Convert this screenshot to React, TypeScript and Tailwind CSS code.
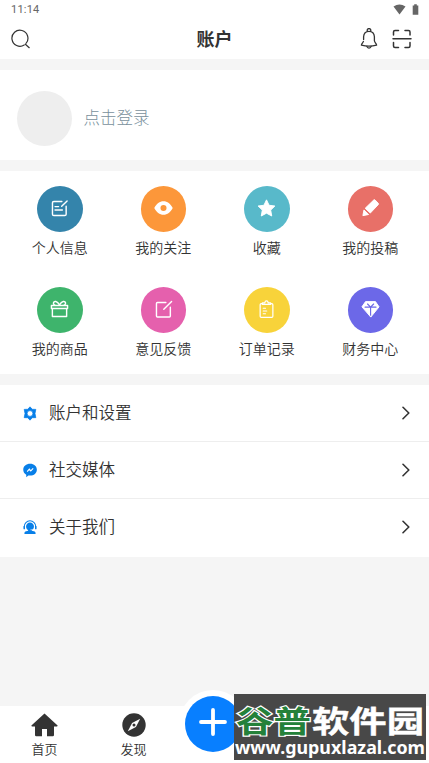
import type { ReactNode } from 'react';

interface Shortcut {
  label: string;
  color: string;
  icon: ReactNode;
}

const line = { fill: 'none', stroke: 'currentColor', strokeLinecap: 'round', strokeLinejoin: 'round' } as const;

// 快捷入口，图标统一 20x20 画布
const shortcuts: Shortcut[] = [
  {
    label: '个人信息',
    color: 'bg-[#3484ab]',
    icon: (
      <g {...line} strokeWidth="1.5">
        <path d="M12.5 2.6H4Q2.6 2.6 2.6 4V16Q2.6 17.4 4 17.4H15.5Q17 17.4 17 16V7.5" />
        <path d="M18 2L12.3 7.7M5.3 8H9M5.3 11.6H13" />
      </g>
    ),
  },
  {
    label: '我的关注',
    color: 'bg-[#fc973a]',
    icon: (
      <path
        fill="currentColor"
        fillRule="evenodd"
        d="M.3 9.5C2.5 5 6 2.3 10 2.3S17.5 5 19.7 9.5C17.5 14 14 16.7 10 16.7S2.5 14 .3 9.5ZM10 6.3A3.2 3.2 0 1 0 10 12.7A3.2 3.2 0 1 0 10 6.3Z"
      />
    ),
  },
  {
    label: '收藏',
    color: 'bg-[#58b9ca]',
    icon: (
      <path
        fill="currentColor"
        stroke="currentColor"
        strokeLinejoin="round"
        d="M10 .9L12.7 6.6L18.8 7.4L14.4 11.7L15.5 17.9L10 14.9L4.5 17.9L5.6 11.7L1.2 7.4L7.3 6.6Z"
      />
    ),
  },
  {
    label: '我的投稿',
    color: 'bg-[#e87068]',
    icon: (
      <g fill="currentColor" stroke="currentColor" strokeLinejoin="round">
        <path d="M13.6 .9Q14.2 .5 14.8 1L18.3 4.7Q18.7 5.3 18.2 5.9L9.8 14.8L4.4 9.8Z" />
        <path d="M3.1 11.5L8 16.3L2 17.5Z" />
      </g>
    ),
  },
  {
    label: '我的商品',
    color: 'bg-[#3eb46c]',
    icon: (
      <g {...line} strokeWidth="1.5">
        <path d="M1.5 5.8H18.5V9H1.5ZM2.5 9V17.3H17.5V9" />
        <path d="M10 5.2C7.5 .7 4.2 1 3.7 2.9C3.4 4.1 4.3 5.3 5.5 5.6M10 5.2C12.5 .7 15.8 1 16.3 2.9C16.6 4.1 15.7 5.3 14.5 5.6" />
      </g>
    ),
  },
  {
    label: '意见反馈',
    color: 'bg-[#e560ad]',
    icon: (
      <g {...line} strokeWidth="1.5">
        <path d="M12.5 2.6H3.6Q2.6 2.6 2.6 3.6V16.9Q2.6 17.9 3.6 17.9H16.2Q17.2 17.9 17.2 16.9V7.5" />
        <path d="M18.5 1.5L10.3 9.7" />
      </g>
    ),
  },
  {
    label: '订单记录',
    color: 'bg-[#f8d33a]',
    icon: (
      <g {...line} strokeWidth="1.3">
        <path d="M5.5 3.8H4.5Q3.3 3.8 3.3 5V17Q3.3 18.2 4.5 18.2H15.5Q16.7 18.2 16.7 17V5Q16.7 3.8 15.5 3.8H14.5" />
        <path d="M5.7 4.7V3H8.2Q8.5 1 10 1T11.8 3H14.3V4.7Z" />
        <path d="M6.5 8.6H9M6.5 11.5H10.3M6.5 14.4H9" strokeWidth="1.1" />
      </g>
    ),
  },
  {
    label: '财务中心',
    color: 'bg-[#6c68e8]',
    icon: (
      <>
        <path fill="currentColor" stroke="currentColor" strokeLinejoin="round" d="M4.8 1.7H15.2L19 7.2L10.3 18L1 7.2Z" />
        <path {...line} className="text-[#6c68e8]" strokeWidth="1.2" d="M4.3 7.5H15.8M10.1 7.7V16M6.9 4.2L10.1 7.4L13.3 4.2" />
      </>
    ),
  },
];

const menus = [
  {
    label: '账户和设置',
    icon: (
      <path
        fillRule="evenodd"
        stroke="currentColor"
        strokeWidth=".8"
        strokeLinejoin="round"
        d="M8 .9L10.4 3.5L14.2 3.6L13.3 8L14.2 12.4L10.4 12.5L8 15.1L5.6 12.5L1.8 12.4L2.7 8L1.8 3.6L5.6 3.5ZM8 4.9A3.1 3.1 0 1 0 8 11.1A3.1 3.1 0 1 0 8 4.9Z"
      />
    ),
  },
  {
    label: '社交媒体',
    icon: (
      <>
        <path d="M8.1 .8C12.3 .8 15.3 3.5 15.3 7.1S12.3 13.4 8.1 13.4C7.4 13.4 6.8 13.3 6.2 13.2L4 15.3V12.4C2 11.3 .8 9.4 .8 7.1C.8 3.5 3.9 .8 8.1 .8Z" />
        <path fill="none" stroke="white" strokeWidth="1.2" d="M5 9.3L7.3 6.6L8.8 8.4L11.4 5.7" />
      </>
    ),
  },
  {
    label: '关于我们',
    icon: (
      <>
        <path fill="none" stroke="currentColor" strokeWidth="1.1" d="M1.8 9.2V7.1A6.2 6.2 0 0 1 14.2 7.1V9.2" />
        <path d="M1.2 6.4H2.6V9.8H1.2ZM13.4 6.4H14.8V9.8H13.4Z" />
        <path d="M8 2.7A4.2 4.2 0 0 1 12.2 7C12.2 8.8 11.2 10 10 10.8V11.4L13 12.3Q14 12.7 14 15H2Q2 12.7 3 12.3L6 11.4V10.8C4.8 10 3.8 8.8 3.8 7A4.2 4.2 0 0 1 8 2.7Z" />
        <path fill="none" stroke="white" strokeWidth=".7" d="M8.5 10.4H11.7L13.2 9.3" />
      </>
    ),
  },
];

function StatusBar() {
  return (
    <div className="flex h-[18px] items-center pr-2.5 pl-[11px] text-[#666]">
      <span className="pt-[2px] font-[Roboto,sans-serif] text-[11px] leading-[18px] tracking-[.2px]">11:14</span>
      <svg className="ml-auto h-[11px] w-[13px]" viewBox="0 0 13 11" fill="currentColor">
        <path d="M.5 2.5Q6.5-1.3 12.5 2.5L6.5 10.5Z" />
      </svg>
      <svg className="ml-1.5 h-[11px] w-[7px]" viewBox="0 0 7 11" fill="currentColor">
        <path d="M2.2 .3H4.8V1.5H6.3V10.7H.7V1.5H2.2Z" />
      </svg>
    </div>
  );
}

function Header() {
  return (
    <header className="flex h-[41px] items-center pr-[17px] pl-[11px] text-[#333]">
      <svg className="h-5 w-[52px]" viewBox="0 0 52 20" {...line} strokeWidth="1.2">
        <path d="M13.2 16A8 8 0 1 1 15.2 14.2M14.4 15.2L18.2 18.7" />
      </svg>
      <h1 className="flex-1 -translate-y-px pl-[6px] text-center text-[18px] leading-6 font-bold">账户</h1>
      <div className="flex w-[52px] items-center justify-between">
        <svg className="h-[22px] w-[18px]" viewBox="0 0 18 22" {...line} strokeWidth="1.3">
          <path d="M7.4 3.1A1.8 1.8 0 1 1 10.6 3.1M3.6 11.4V8.8C3.8 5.3 6 3.3 9 3.3S14.2 5.3 14.4 8.8V12.8C14.5 14.4 16.2 15.2 16.6 17.1C12 18.4 6 18.4 1.4 17.1C1.7 15.4 3 14.6 3.4 13.4" />
          <path d="M6.8 18.5Q9 21.8 11.2 18.5" />
        </svg>
        <svg className="h-5 w-5" viewBox="0 0 20 20" {...line} strokeWidth="1.5">
          <path d="M1.5 6V3Q1.5 1.5 3 1.5H6.5M13 1.5H16.5Q18 1.5 18 3V6M1.5 13.5V17Q1.5 18.5 3 18.5H6.5M13 18.5H16.5Q18 18.5 18 17V13.5M1 9.7H19" />
        </svg>
      </div>
    </header>
  );
}

function Watermark() {
  return (
    <div className="absolute top-[694px] left-[234px] h-[66px] w-48 overflow-hidden bg-[#484848]">
      <svg className="h-full w-full" viewBox="0 0 192 66">
        <g fontFamily="'Noto Sans CJK SC', sans-serif" fontWeight="700" fontSize="30">
          <text x="2" y="37.5" textLength="75" lengthAdjust="spacingAndGlyphs" fill="#24813a" stroke="#fff" strokeWidth="2.4" paintOrder="stroke">
            谷普
          </text>
          <text x="78" y="37.5" textLength="112" lengthAdjust="spacingAndGlyphs" fill="#fff" stroke="#fff" strokeWidth=".4">
            软件园
          </text>
        </g>
        <text x="1" y="59.5" textLength="190" lengthAdjust="spacingAndGlyphs" fill="#fff" fontFamily="'Noto Sans', sans-serif" fontWeight="700" fontSize="17.5">
          www.gupuxlazal.com
        </text>
      </svg>
    </div>
  );
}

function TabBar() {
  return (
    <nav className="relative flex h-[57px] bg-white text-[13px] leading-[18px] font-[350] text-[#333]">
      <div className="flex w-[89px] flex-col items-center pt-[7px]">
        <svg className="h-6 w-[27px]" viewBox="0 0 27 24" fill="currentColor">
          <path d="M13.5 .5L26.6 12.5Q26.8 13.3 26 13.4H23V22Q23 23.2 21.8 23.2H16V16H11V23.2H5.2Q4 23.2 4 22V13.4H1Q.2 13.3 .4 12.5Z" />
        </svg>
        <span className="mt-[3px]">首页</span>
      </div>
      <div className="flex w-[89px] flex-col items-center pt-[7px]">
        <svg className="h-6 w-6" viewBox="0 0 24 24">
          <circle cx="12" cy="12" r="11.7" fill="#333" />
          <path d="M18.2 5.8L13.9 13.9L5.8 18.2L10.1 10.1Z" fill="white" />
          <circle cx="12" cy="12" r="1.5" fill="#333" />
        </svg>
        <span className="mt-[3px]">发现</span>
      </div>
      <button className="absolute -top-4 left-[179px] flex h-[68px] w-[68px] items-center justify-center rounded-full bg-white">
        <span className="flex h-14 w-14 items-center justify-center rounded-full bg-[#087fff]">
          <svg className="h-7 w-7 -translate-y-[2px]" viewBox="0 0 28 28" {...line} stroke="white" strokeWidth="3.8">
            <path d="M14 2V26M2 14H26" />
          </svg>
        </span>
      </button>
    </nav>
  );
}

export default function App() {
  return (
    <div className="relative flex h-[763px] w-[429px] flex-col overflow-hidden bg-[#f5f5f5] font-['Noto_Sans_CJK_SC',sans-serif] text-[#333]">
      <div className="h-[59px] bg-white">
        <StatusBar />
        <Header />
      </div>

      <section className="mt-[11px] flex h-[90px] items-center bg-white pt-[6px] pl-[17px]">
        <div className="h-[55px] w-[55px] rounded-full bg-[#eee]" />
        <span className="ml-[11.5px] -translate-y-px text-[16.5px] leading-6 font-light text-[#78909c]">点击登录</span>
      </section>

      <section className="mt-[11px] grid h-[203px] grid-cols-4 content-start bg-white pt-[15px] pr-[7px] pl-2">
        {shortcuts.map(s => (
          <div key={s.label} className="flex h-[101px] flex-col items-center">
            <div className={`flex h-[45.5px] w-[45.5px] items-center justify-center rounded-full text-white ${s.color}`}>
              <svg className="h-[19px] w-[19px]" viewBox="0 0 20 20">
                {s.icon}
              </svg>
            </div>
            <span className="mt-[5.5px] text-[14px] leading-5 font-[350]">{s.label}</span>
          </div>
        ))}
      </section>

      <section className="mt-[11px] bg-white pb-px">
        {menus.map(m => (
          <div key={m.label} className="flex h-[57px] items-center border-b border-[#eee] pr-[19px] pl-[22px] last:border-white">
            <svg className="h-[15px] w-4 text-[#087fe8]" viewBox="0 0 16 16" fill="currentColor">
              {m.icon}
            </svg>
            <span className="ml-[11px] -translate-y-px text-[16.5px] leading-6 font-[350]">{m.label}</span>
            <svg className="ml-auto h-3.5 w-2" viewBox="0 0 8 14" {...line} strokeWidth="1.6">
              <path d="M1 1.3L6.8 7L1 12.7" />
            </svg>
          </div>
        ))}
      </section>

      <div className="mt-auto">
        <TabBar />
      </div>
      <Watermark />
    </div>
  );
}
